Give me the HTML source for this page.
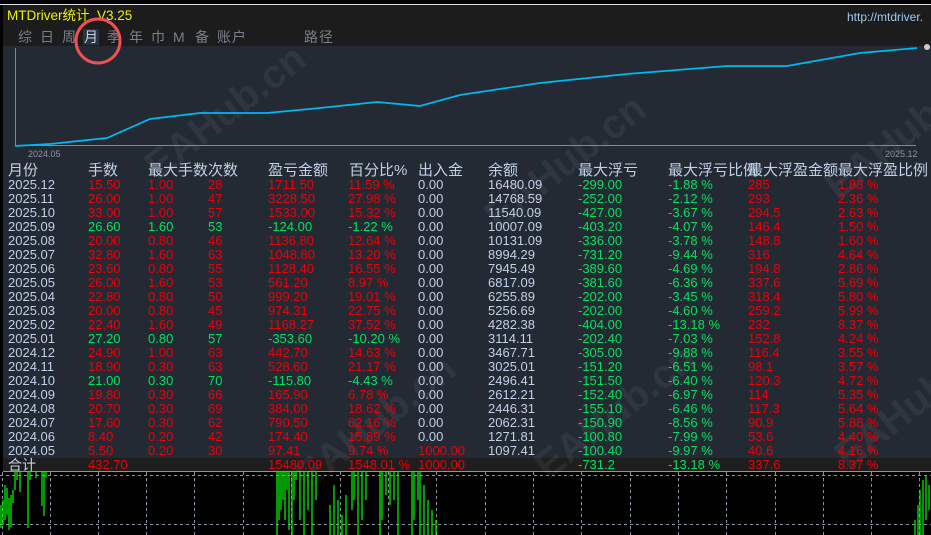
<!DOCTYPE html>
<html><head><meta charset="utf-8"><style>
body{margin:0;width:931px;height:535px;overflow:hidden;background:#000;font-family:"Liberation Sans","Noto Sans CJK SC",sans-serif;position:relative}
.top{position:absolute;left:0;top:0;width:931px;height:4px;background:#000;border-bottom:1px solid #ddd}
.hdr{position:absolute;left:3px;top:5px;width:928px;height:41px;background:#1c1c1c}
.panel{position:absolute;left:3px;top:46px;width:928px;height:412px;background:#242a33}
.tot{position:absolute;left:3px;top:458px;width:928px;height:13px;background:#1e1e1e;border-bottom:1px solid #8a94a3}
.t{position:absolute;white-space:nowrap;font-size:13px;line-height:14px}
.tab{position:absolute;top:29px;color:#7a7f88;font-size:14px;line-height:16px}
.wm{position:absolute;color:rgba(255,255,255,0.06);font-size:40px;font-weight:bold;transform:rotate(-38deg);white-space:nowrap}
.r{position:absolute;left:0;width:931px;height:14px;font-size:13px;line-height:14px}
.r span{position:absolute;white-space:nowrap}
.R{color:#e8000b}.G{color:#00e060}.W{color:#c0d0e8}
</style></head><body>
<div class="top"></div>
<div class="hdr"></div>
<div class="panel"></div>
<div class="tot"></div>
<div class="wm" style="left:130px;top:90px">EAHub.cn</div>
<div class="wm" style="left:470px;top:140px">EAHub.cn</div>
<div class="wm" style="left:810px;top:110px">EAHub.cn</div>
<div class="wm" style="left:520px;top:390px">EAHub.cn</div>
<div class="wm" style="left:820px;top:380px">EAHub.cn</div>
<div class="wm" style="left:280px;top:400px">EAHub.cn</div>
<div class="t" style="left:7px;top:9px;color:#f0f000;font-size:13.5px">MTDriver统计&nbsp;&nbsp;V3.25</div>
<div class="t" style="left:847px;top:10px;color:#9ec8f0;font-size:12px">http://mtdriver.</div>
<div class="tab" style="left:18px">综</div><div class="tab" style="left:40px">日</div><div class="tab" style="left:62px">周</div>
<div class="tab" style="left:83px;color:#c8d4e4;background:#2a3340;padding:0 1px">月</div>
<div class="tab" style="left:107px">季</div><div class="tab" style="left:129px">年</div><div class="tab" style="left:151px">巾</div><div class="tab" style="left:173px">M</div><div class="tab" style="left:195px">备</div><div class="tab" style="left:217px;letter-spacing:1px">账户</div>
<div class="tab" style="left:304px;letter-spacing:1px">路径</div>
<svg style="position:absolute;left:0;top:0" width="931" height="535">
<circle cx="98" cy="41" r="22" fill="none" stroke="#f05050" stroke-width="3"/>
<line x1="15.5" y1="48" x2="15.5" y2="146" stroke="#888"/>
<line x1="15" y1="145.5" x2="916" y2="145.5" stroke="#888"/>
<polyline fill="none" stroke="#00b8f0" stroke-width="1.7" points="15,146 50,144 107,138 150,119 200,113 267,113 320,108 377,102 420,106 460,95 540,83 627,74 727,66 787,66 860,53 917,48"/>
<circle cx="927" cy="47" r="3" fill="#ccc"/>
<g stroke="#8a94a3" stroke-dasharray="3,3">
<line x1="0" y1="475.5" x2="931" y2="475.5"/><line x1="0" y1="524.5" x2="931" y2="524.5"/>
<line x1="2.5" y1="472" x2="2.5" y2="535"/><line x1="50.5" y1="472" x2="50.5" y2="535"/><line x1="98.5" y1="472" x2="98.5" y2="535"/><line x1="146.5" y1="472" x2="146.5" y2="535"/><line x1="194.5" y1="472" x2="194.5" y2="535"/><line x1="243.5" y1="472" x2="243.5" y2="535"/><line x1="291.5" y1="472" x2="291.5" y2="535"/><line x1="340.5" y1="472" x2="340.5" y2="535"/><line x1="388.5" y1="472" x2="388.5" y2="535"/><line x1="436.5" y1="472" x2="436.5" y2="535"/><line x1="485.5" y1="472" x2="485.5" y2="535"/><line x1="533.5" y1="472" x2="533.5" y2="535"/><line x1="581.5" y1="472" x2="581.5" y2="535"/><line x1="630.5" y1="472" x2="630.5" y2="535"/><line x1="678.5" y1="472" x2="678.5" y2="535"/><line x1="726.5" y1="472" x2="726.5" y2="535"/><line x1="775.5" y1="472" x2="775.5" y2="535"/><line x1="823.5" y1="472" x2="823.5" y2="535"/><line x1="871.5" y1="472" x2="871.5" y2="535"/><line x1="919.5" y1="472" x2="919.5" y2="535"/>
</g>
<g stroke="#00ff00" stroke-width="1.2">
<line x1="1" y1="505" x2="1" y2="528"/><line x1="3" y1="500" x2="3" y2="525"/><line x1="5" y1="485" x2="5" y2="520"/><line x1="7" y1="488" x2="7" y2="515"/><line x1="9" y1="498" x2="9" y2="530"/><line x1="11" y1="495" x2="11" y2="527"/><line x1="13" y1="490" x2="13" y2="503"/><line x1="15" y1="472" x2="15" y2="490"/><line x1="17" y1="472" x2="17" y2="480"/><line x1="20" y1="472" x2="20" y2="492"/><line x1="28" y1="472" x2="28" y2="528"/><line x1="30" y1="472" x2="30" y2="480"/><line x1="36" y1="472" x2="36" y2="478"/><line x1="42" y1="472" x2="42" y2="506"/><line x1="44" y1="472" x2="44" y2="516"/><line x1="46" y1="472" x2="46" y2="478"/>
<line x1="277" y1="472" x2="277" y2="535"/><line x1="279" y1="472" x2="279" y2="520"/><line x1="281" y1="472" x2="281" y2="510"/><line x1="283" y1="472" x2="283" y2="500"/><line x1="285" y1="472" x2="285" y2="520"/><line x1="287" y1="472" x2="287" y2="490"/><line x1="289" y1="472" x2="289" y2="530"/><line x1="292" y1="472" x2="292" y2="535"/><line x1="294" y1="472" x2="294" y2="500"/><line x1="296" y1="472" x2="296" y2="480"/><line x1="300" y1="472" x2="300" y2="520"/><line x1="304" y1="472" x2="304" y2="535"/><line x1="308" y1="472" x2="308" y2="510"/><line x1="312" y1="472" x2="312" y2="535"/><line x1="316" y1="472" x2="316" y2="500"/><line x1="330" y1="505" x2="330" y2="535"/><line x1="334" y1="485" x2="334" y2="535"/><line x1="338" y1="500" x2="338" y2="535"/><line x1="342" y1="515" x2="342" y2="535"/><line x1="346" y1="495" x2="346" y2="535"/><line x1="352" y1="472" x2="352" y2="510"/><line x1="354" y1="472" x2="354" y2="500"/><line x1="358" y1="472" x2="358" y2="535"/><line x1="362" y1="472" x2="362" y2="520"/><line x1="366" y1="472" x2="366" y2="500"/><line x1="380" y1="472" x2="380" y2="535"/><line x1="382" y1="472" x2="382" y2="520"/><line x1="386" y1="472" x2="386" y2="495"/><line x1="390" y1="472" x2="390" y2="505"/><line x1="394" y1="472" x2="394" y2="500"/><line x1="398" y1="472" x2="398" y2="535"/><line x1="412" y1="472" x2="412" y2="535"/><line x1="414" y1="472" x2="414" y2="520"/><line x1="418" y1="472" x2="418" y2="500"/><line x1="420" y1="472" x2="420" y2="535"/><line x1="424" y1="485" x2="424" y2="535"/><line x1="428" y1="500" x2="428" y2="535"/><line x1="432" y1="510" x2="432" y2="535"/><line x1="436" y1="520" x2="436" y2="535"/>
<line x1="915" y1="520" x2="915" y2="535"/><line x1="918" y1="505" x2="918" y2="535"/><line x1="920" y1="490" x2="920" y2="535"/><line x1="923" y1="480" x2="923" y2="535"/><line x1="926" y1="475" x2="926" y2="520"/><line x1="929" y1="485" x2="929" y2="510"/>
</g>
</svg>
<div class="t" style="left:28px;top:147px;color:#8a94a3;font-size:9px">2024.05</div>
<div class="t" style="left:885px;top:147px;color:#8a94a3;font-size:9px">2025.12</div>
<div class="r W" style="top:162px;font-size:15px;line-height:17px;height:17px"><span style="left:8px">月份</span><span style="left:88px">手数</span><span style="left:148px">最大手数次数</span><span style="left:268px">盈亏金额</span><span style="left:349px">百分比%</span><span style="left:418px">出入金</span><span style="left:488px">余额</span><span style="left:578px">最大浮亏</span><span style="left:668px">最大浮亏比例</span><span style="left:748px">最大浮盈金额</span><span style="left:838px">最大浮盈比例</span></div>
<div class="r" style="top:178px"><span class="W" style="left:8px">2025.12</span><span class="R" style="left:88px">15.50</span><span class="R" style="left:148px">1.00</span><span class="R" style="left:208px">28</span><span class="R" style="left:268px">1711.50</span><span class="R" style="left:348px">11.59 %</span><span class="W" style="left:418px">0.00</span><span class="W" style="left:488px">16480.09</span><span class="G" style="left:578px">-299.00</span><span class="G" style="left:668px">-1.88 %</span><span class="R" style="left:748px">285</span><span class="R" style="left:838px">1.88 %</span></div>
<div class="r" style="top:192px"><span class="W" style="left:8px">2025.11</span><span class="R" style="left:88px">26.00</span><span class="R" style="left:148px">1.00</span><span class="R" style="left:208px">47</span><span class="R" style="left:268px">3228.50</span><span class="R" style="left:348px">27.98 %</span><span class="W" style="left:418px">0.00</span><span class="W" style="left:488px">14768.59</span><span class="G" style="left:578px">-252.00</span><span class="G" style="left:668px">-2.12 %</span><span class="R" style="left:748px">293</span><span class="R" style="left:838px">2.36 %</span></div>
<div class="r" style="top:206px"><span class="W" style="left:8px">2025.10</span><span class="R" style="left:88px">33.00</span><span class="R" style="left:148px">1.00</span><span class="R" style="left:208px">57</span><span class="R" style="left:268px">1533.00</span><span class="R" style="left:348px">15.32 %</span><span class="W" style="left:418px">0.00</span><span class="W" style="left:488px">11540.09</span><span class="G" style="left:578px">-427.00</span><span class="G" style="left:668px">-3.67 %</span><span class="R" style="left:748px">294.5</span><span class="R" style="left:838px">2.63 %</span></div>
<div class="r" style="top:220px"><span class="W" style="left:8px">2025.09</span><span class="G" style="left:88px">26.60</span><span class="G" style="left:148px">1.60</span><span class="G" style="left:208px">53</span><span class="G" style="left:268px">-124.00</span><span class="G" style="left:348px">-1.22 %</span><span class="W" style="left:418px">0.00</span><span class="W" style="left:488px">10007.09</span><span class="G" style="left:578px">-403.20</span><span class="G" style="left:668px">-4.07 %</span><span class="R" style="left:748px">146.4</span><span class="R" style="left:838px">1.50 %</span></div>
<div class="r" style="top:234px"><span class="W" style="left:8px">2025.08</span><span class="R" style="left:88px">20.00</span><span class="R" style="left:148px">0.80</span><span class="R" style="left:208px">46</span><span class="R" style="left:268px">1136.80</span><span class="R" style="left:348px">12.64 %</span><span class="W" style="left:418px">0.00</span><span class="W" style="left:488px">10131.09</span><span class="G" style="left:578px">-336.00</span><span class="G" style="left:668px">-3.78 %</span><span class="R" style="left:748px">148.8</span><span class="R" style="left:838px">1.60 %</span></div>
<div class="r" style="top:248px"><span class="W" style="left:8px">2025.07</span><span class="R" style="left:88px">32.80</span><span class="R" style="left:148px">1.60</span><span class="R" style="left:208px">63</span><span class="R" style="left:268px">1048.80</span><span class="R" style="left:348px">13.20 %</span><span class="W" style="left:418px">0.00</span><span class="W" style="left:488px">8994.29</span><span class="G" style="left:578px">-731.20</span><span class="G" style="left:668px">-9.44 %</span><span class="R" style="left:748px">316</span><span class="R" style="left:838px">4.64 %</span></div>
<div class="r" style="top:262px"><span class="W" style="left:8px">2025.06</span><span class="R" style="left:88px">23.60</span><span class="R" style="left:148px">0.80</span><span class="R" style="left:208px">55</span><span class="R" style="left:268px">1128.40</span><span class="R" style="left:348px">16.55 %</span><span class="W" style="left:418px">0.00</span><span class="W" style="left:488px">7945.49</span><span class="G" style="left:578px">-389.60</span><span class="G" style="left:668px">-4.69 %</span><span class="R" style="left:748px">194.8</span><span class="R" style="left:838px">2.86 %</span></div>
<div class="r" style="top:276px"><span class="W" style="left:8px">2025.05</span><span class="R" style="left:88px">26.00</span><span class="R" style="left:148px">1.60</span><span class="R" style="left:208px">53</span><span class="R" style="left:268px">561.20</span><span class="R" style="left:348px">8.97 %</span><span class="W" style="left:418px">0.00</span><span class="W" style="left:488px">6817.09</span><span class="G" style="left:578px">-381.60</span><span class="G" style="left:668px">-6.36 %</span><span class="R" style="left:748px">337.6</span><span class="R" style="left:838px">5.69 %</span></div>
<div class="r" style="top:290px"><span class="W" style="left:8px">2025.04</span><span class="R" style="left:88px">22.80</span><span class="R" style="left:148px">0.80</span><span class="R" style="left:208px">50</span><span class="R" style="left:268px">999.20</span><span class="R" style="left:348px">19.01 %</span><span class="W" style="left:418px">0.00</span><span class="W" style="left:488px">6255.89</span><span class="G" style="left:578px">-202.00</span><span class="G" style="left:668px">-3.45 %</span><span class="R" style="left:748px">318.4</span><span class="R" style="left:838px">5.80 %</span></div>
<div class="r" style="top:304px"><span class="W" style="left:8px">2025.03</span><span class="R" style="left:88px">20.00</span><span class="R" style="left:148px">0.80</span><span class="R" style="left:208px">45</span><span class="R" style="left:268px">974.31</span><span class="R" style="left:348px">22.75 %</span><span class="W" style="left:418px">0.00</span><span class="W" style="left:488px">5256.69</span><span class="G" style="left:578px">-202.00</span><span class="G" style="left:668px">-4.60 %</span><span class="R" style="left:748px">259.2</span><span class="R" style="left:838px">5.99 %</span></div>
<div class="r" style="top:318px"><span class="W" style="left:8px">2025.02</span><span class="R" style="left:88px">22.40</span><span class="R" style="left:148px">1.60</span><span class="R" style="left:208px">49</span><span class="R" style="left:268px">1168.27</span><span class="R" style="left:348px">37.52 %</span><span class="W" style="left:418px">0.00</span><span class="W" style="left:488px">4282.38</span><span class="G" style="left:578px">-404.00</span><span class="G" style="left:668px">-13.18 %</span><span class="R" style="left:748px">232</span><span class="R" style="left:838px">8.37 %</span></div>
<div class="r" style="top:332px"><span class="W" style="left:8px">2025.01</span><span class="G" style="left:88px">27.20</span><span class="G" style="left:148px">0.80</span><span class="G" style="left:208px">57</span><span class="G" style="left:268px">-353.60</span><span class="G" style="left:348px">-10.20 %</span><span class="W" style="left:418px">0.00</span><span class="W" style="left:488px">3114.11</span><span class="G" style="left:578px">-202.40</span><span class="G" style="left:668px">-7.03 %</span><span class="R" style="left:748px">152.8</span><span class="R" style="left:838px">4.24 %</span></div>
<div class="r" style="top:346px"><span class="W" style="left:8px">2024.12</span><span class="R" style="left:88px">24.90</span><span class="R" style="left:148px">1.00</span><span class="R" style="left:208px">63</span><span class="R" style="left:268px">442.70</span><span class="R" style="left:348px">14.63 %</span><span class="W" style="left:418px">0.00</span><span class="W" style="left:488px">3467.71</span><span class="G" style="left:578px">-305.00</span><span class="G" style="left:668px">-9.88 %</span><span class="R" style="left:748px">116.4</span><span class="R" style="left:838px">3.55 %</span></div>
<div class="r" style="top:360px"><span class="W" style="left:8px">2024.11</span><span class="R" style="left:88px">18.90</span><span class="R" style="left:148px">0.30</span><span class="R" style="left:208px">63</span><span class="R" style="left:268px">528.60</span><span class="R" style="left:348px">21.17 %</span><span class="W" style="left:418px">0.00</span><span class="W" style="left:488px">3025.01</span><span class="G" style="left:578px">-151.20</span><span class="G" style="left:668px">-6.51 %</span><span class="R" style="left:748px">98.1</span><span class="R" style="left:838px">3.57 %</span></div>
<div class="r" style="top:374px"><span class="W" style="left:8px">2024.10</span><span class="G" style="left:88px">21.00</span><span class="G" style="left:148px">0.30</span><span class="G" style="left:208px">70</span><span class="G" style="left:268px">-115.80</span><span class="G" style="left:348px">-4.43 %</span><span class="W" style="left:418px">0.00</span><span class="W" style="left:488px">2496.41</span><span class="G" style="left:578px">-151.50</span><span class="G" style="left:668px">-6.40 %</span><span class="R" style="left:748px">120.3</span><span class="R" style="left:838px">4.72 %</span></div>
<div class="r" style="top:388px"><span class="W" style="left:8px">2024.09</span><span class="R" style="left:88px">19.80</span><span class="R" style="left:148px">0.30</span><span class="R" style="left:208px">66</span><span class="R" style="left:268px">165.90</span><span class="R" style="left:348px">6.78 %</span><span class="W" style="left:418px">0.00</span><span class="W" style="left:488px">2612.21</span><span class="G" style="left:578px">-152.40</span><span class="G" style="left:668px">-6.97 %</span><span class="R" style="left:748px">114</span><span class="R" style="left:838px">5.35 %</span></div>
<div class="r" style="top:402px"><span class="W" style="left:8px">2024.08</span><span class="R" style="left:88px">20.70</span><span class="R" style="left:148px">0.30</span><span class="R" style="left:208px">69</span><span class="R" style="left:268px">384.00</span><span class="R" style="left:348px">18.62 %</span><span class="W" style="left:418px">0.00</span><span class="W" style="left:488px">2446.31</span><span class="G" style="left:578px">-155.10</span><span class="G" style="left:668px">-6.46 %</span><span class="R" style="left:748px">117.3</span><span class="R" style="left:838px">5.64 %</span></div>
<div class="r" style="top:416px"><span class="W" style="left:8px">2024.07</span><span class="R" style="left:88px">17.60</span><span class="R" style="left:148px">0.30</span><span class="R" style="left:208px">62</span><span class="R" style="left:268px">790.50</span><span class="R" style="left:348px">62.16 %</span><span class="W" style="left:418px">0.00</span><span class="W" style="left:488px">2062.31</span><span class="G" style="left:578px">-150.90</span><span class="G" style="left:668px">-8.56 %</span><span class="R" style="left:748px">90.9</span><span class="R" style="left:838px">5.88 %</span></div>
<div class="r" style="top:430px"><span class="W" style="left:8px">2024.06</span><span class="R" style="left:88px">8.40</span><span class="R" style="left:148px">0.20</span><span class="R" style="left:208px">42</span><span class="R" style="left:268px">174.40</span><span class="R" style="left:348px">15.89 %</span><span class="W" style="left:418px">0.00</span><span class="W" style="left:488px">1271.81</span><span class="G" style="left:578px">-100.80</span><span class="G" style="left:668px">-7.99 %</span><span class="R" style="left:748px">53.6</span><span class="R" style="left:838px">4.40 %</span></div>
<div class="r" style="top:444px"><span class="W" style="left:8px">2024.05</span><span class="R" style="left:88px">5.50</span><span class="R" style="left:148px">0.20</span><span class="R" style="left:208px">30</span><span class="R" style="left:268px">97.41</span><span class="R" style="left:348px">9.74 %</span><span class="R" style="left:418px">1000.00</span><span class="W" style="left:488px">1097.41</span><span class="G" style="left:578px">-100.40</span><span class="G" style="left:668px">-9.97 %</span><span class="R" style="left:748px">40.6</span><span class="R" style="left:838px">4.16 %</span></div>
<div class="r" style="top:458px"><span class="W" style="left:8px;font-size:14px">合计</span><span class="R" style="left:88px">432.70</span><span class="R" style="left:268px">15480.09</span><span class="R" style="left:348px">1548.01 %</span><span class="R" style="left:418px">1000.00</span><span class="G" style="left:578px">-731.2</span><span class="G" style="left:668px">-13.18 %</span><span class="R" style="left:748px">337.6</span><span class="R" style="left:838px">8.37 %</span></div>
</body></html>
